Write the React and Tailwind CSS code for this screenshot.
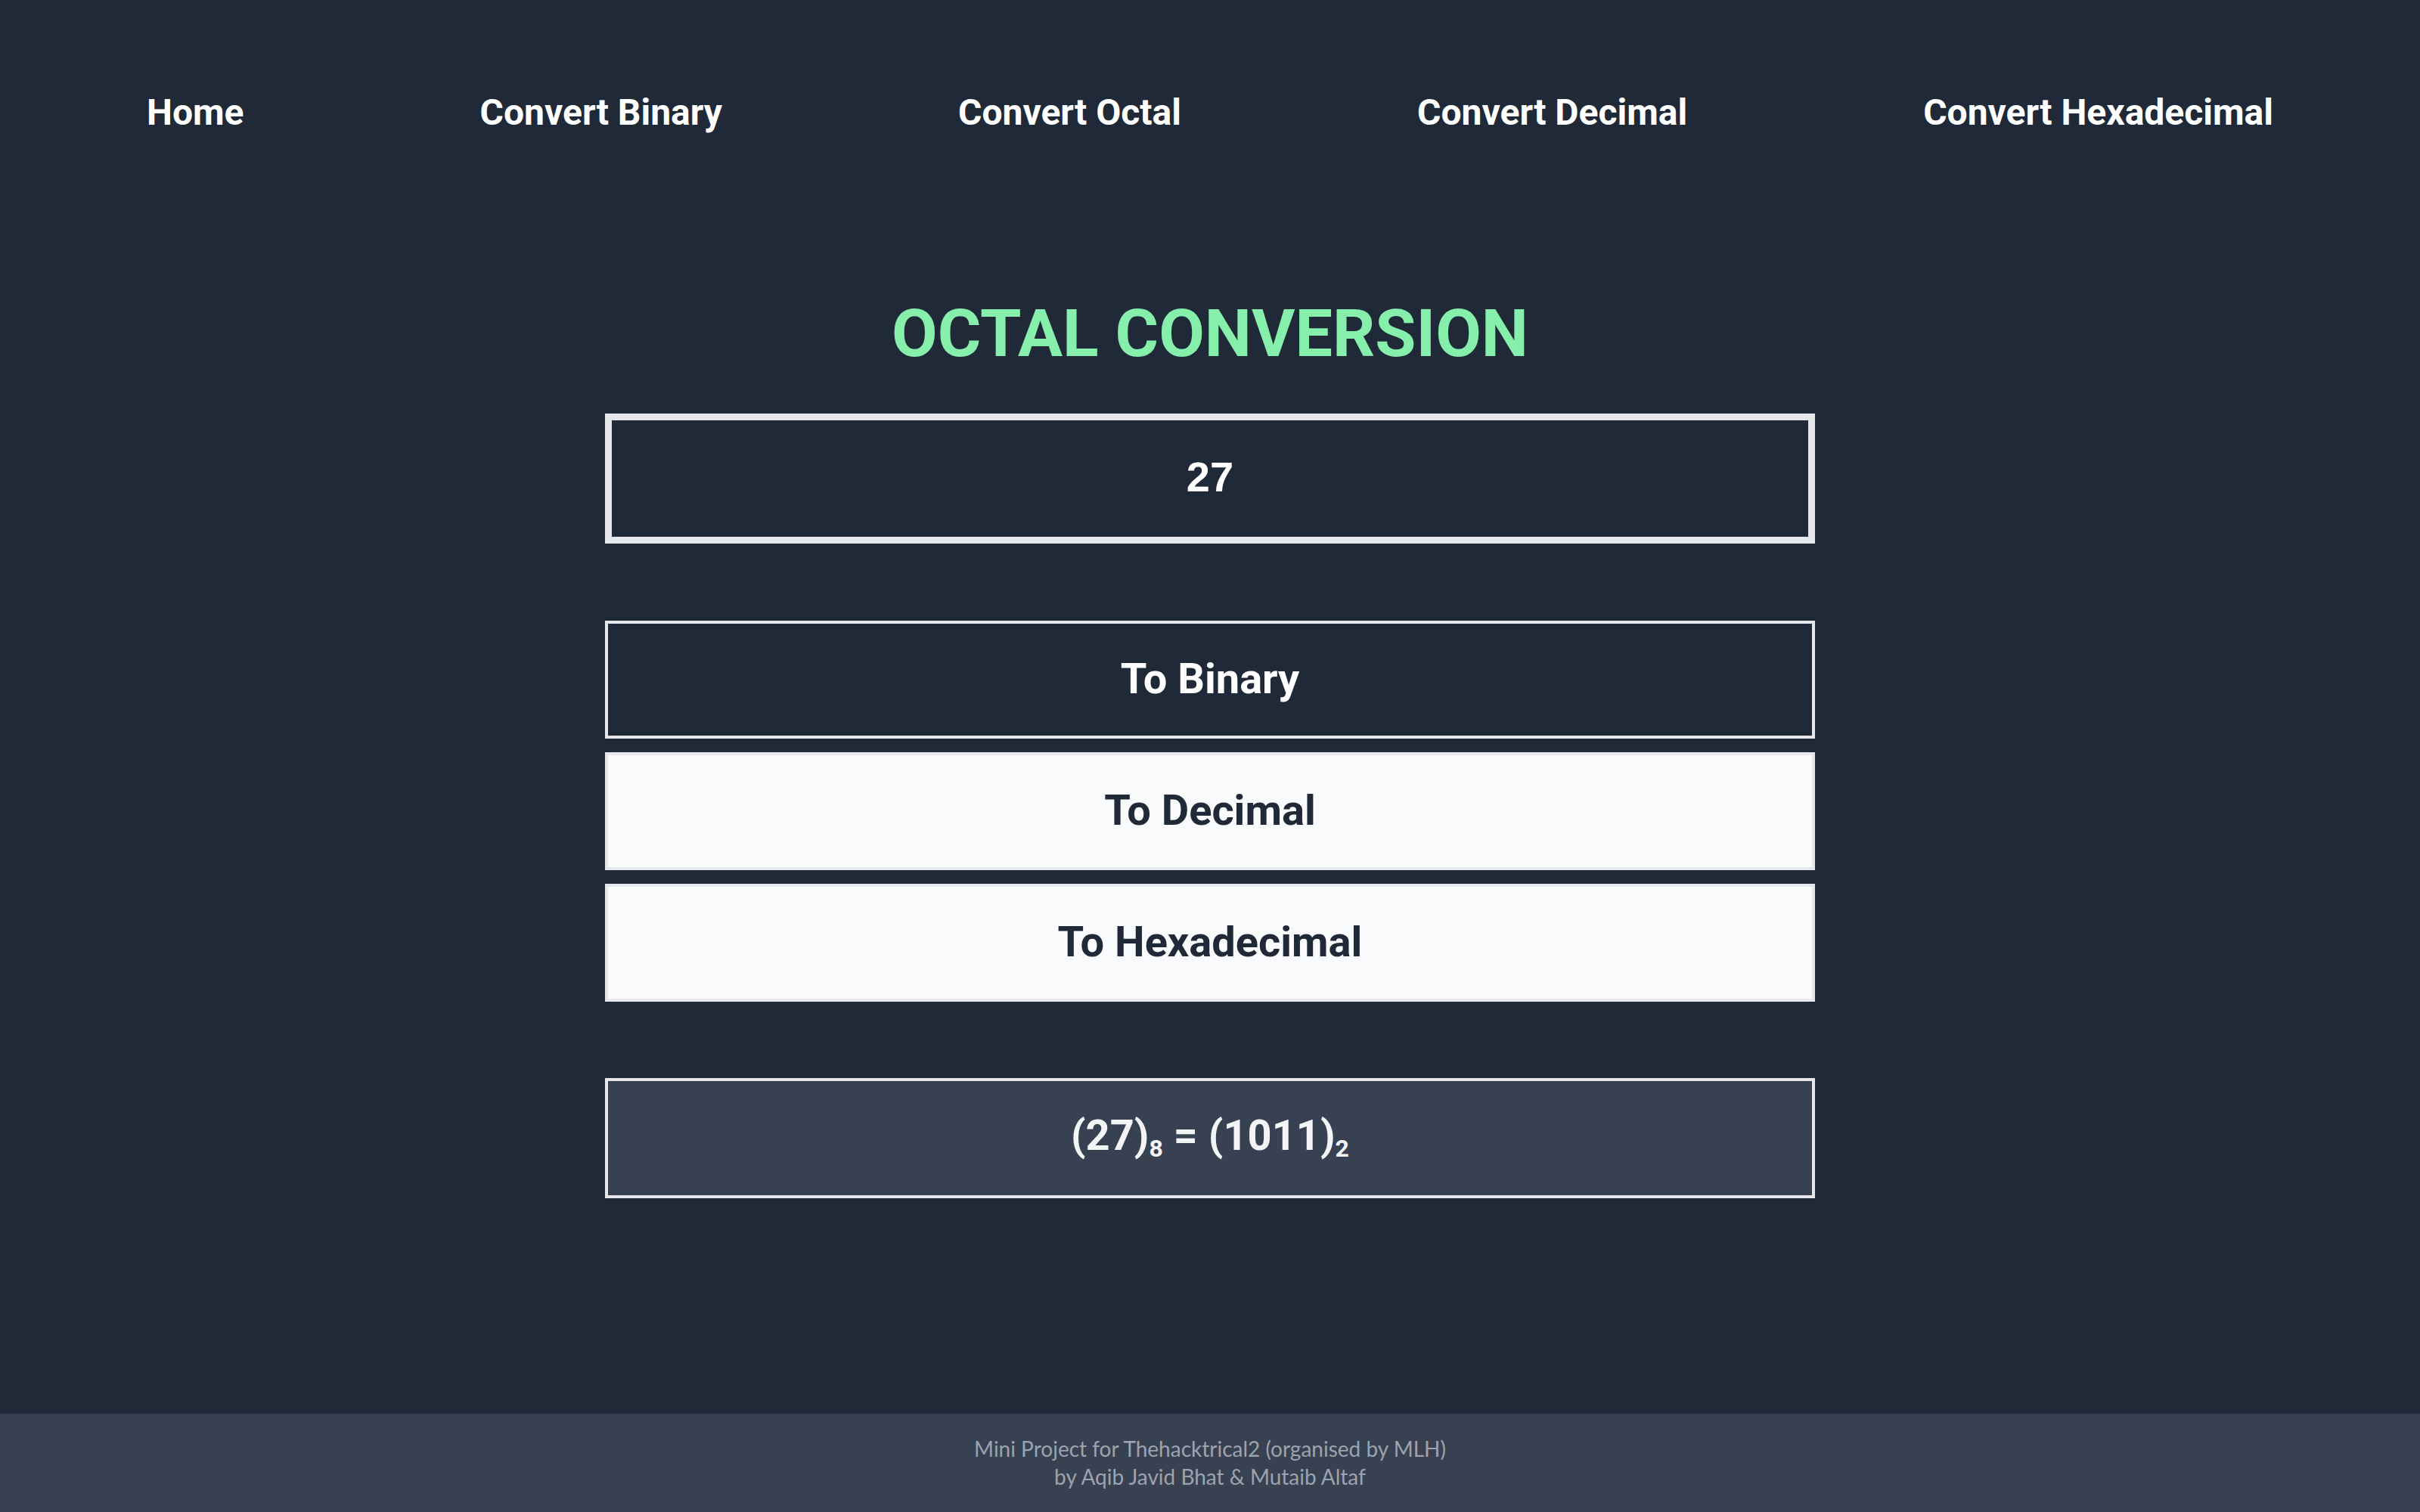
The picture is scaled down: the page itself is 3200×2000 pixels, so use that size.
import React, { useState } from "react";

const navItems = ["Home", "Convert Binary", "Convert Octal", "Convert Decimal", "Convert Hexadecimal"];

export default function App() {
  const [value, setValue] = useState("27");
  const [mode, setMode] = useState("binary");
  const buttons = [
    { key: "binary", label: "To Binary" },
    { key: "decimal", label: "To Decimal" },
    { key: "hex", label: "To Hexadecimal" },
  ];
  return (
    <div className="h-screen flex flex-col bg-[#1f2937] font-['Roboto',sans-serif]">
      <nav className="h-[298px] shrink-0 flex items-center justify-between px-[194px]">
        {navItems.map((n) => (
          <a key={n} href="#" className="text-white font-bold text-[48px] leading-none">
            {n}
          </a>
        ))}
      </nav>
      <main className="flex-1 flex flex-col items-center">
        <h1 className="mt-[99px] text-[88px] leading-none font-bold text-[#86efac]">
          OCTAL CONVERSION
        </h1>
        <input
          value={value}
          onChange={(e) => setValue(e.target.value)}
          className="mt-[62px] w-[1600px] h-[172px] border-[9px] border-[#e5e7eb] bg-[#1f2937] text-white text-center font-bold text-[56px] font-['Liberation_Sans',sans-serif] outline-none pb-[6px]"
        />
        <div className="mt-[102px] w-[1600px] flex flex-col gap-[18px]">
          {buttons.map((b) => (
            <button
              key={b.key}
              onClick={() => setMode(b.key)}
              className={
                mode === b.key
                  ? "h-[156px] w-full border-4 border-[#e5e7eb] bg-[#1f2937] text-white font-bold text-[56px] leading-none pb-[2px]"
                  : "h-[156px] w-full border-4 border-[#e5e7eb] bg-[#f9fafb] text-[#1f2937] font-bold text-[56px] leading-none pb-[2px]"
              }
            >
              {b.label}
            </button>
          ))}
        </div>
        <div className="mt-[101px] w-[1600px] h-[159px] border-4 border-[#e5e7eb] bg-[#374151] flex items-center justify-center text-[#f3f4f6] font-bold text-[56px] leading-none pb-[8px]">
          <span>
            (27)<sub className="text-[32px] bottom-[-9px]">8</sub> = (1011)<sub className="text-[32px] bottom-[-9px]">2</sub>
          </span>
        </div>
      </main>
      <footer className="h-[130px] shrink-0 bg-[#374151] flex flex-col items-center justify-center text-[#9ca3af] text-[28px] leading-[37px] font-['Lato',sans-serif]">
        <p>Mini Project for Thehacktrical2 (organised by MLH)</p>
        <p>by Aqib Javid Bhat &amp; Mutaib Altaf</p>
      </footer>
    </div>
  );
}
